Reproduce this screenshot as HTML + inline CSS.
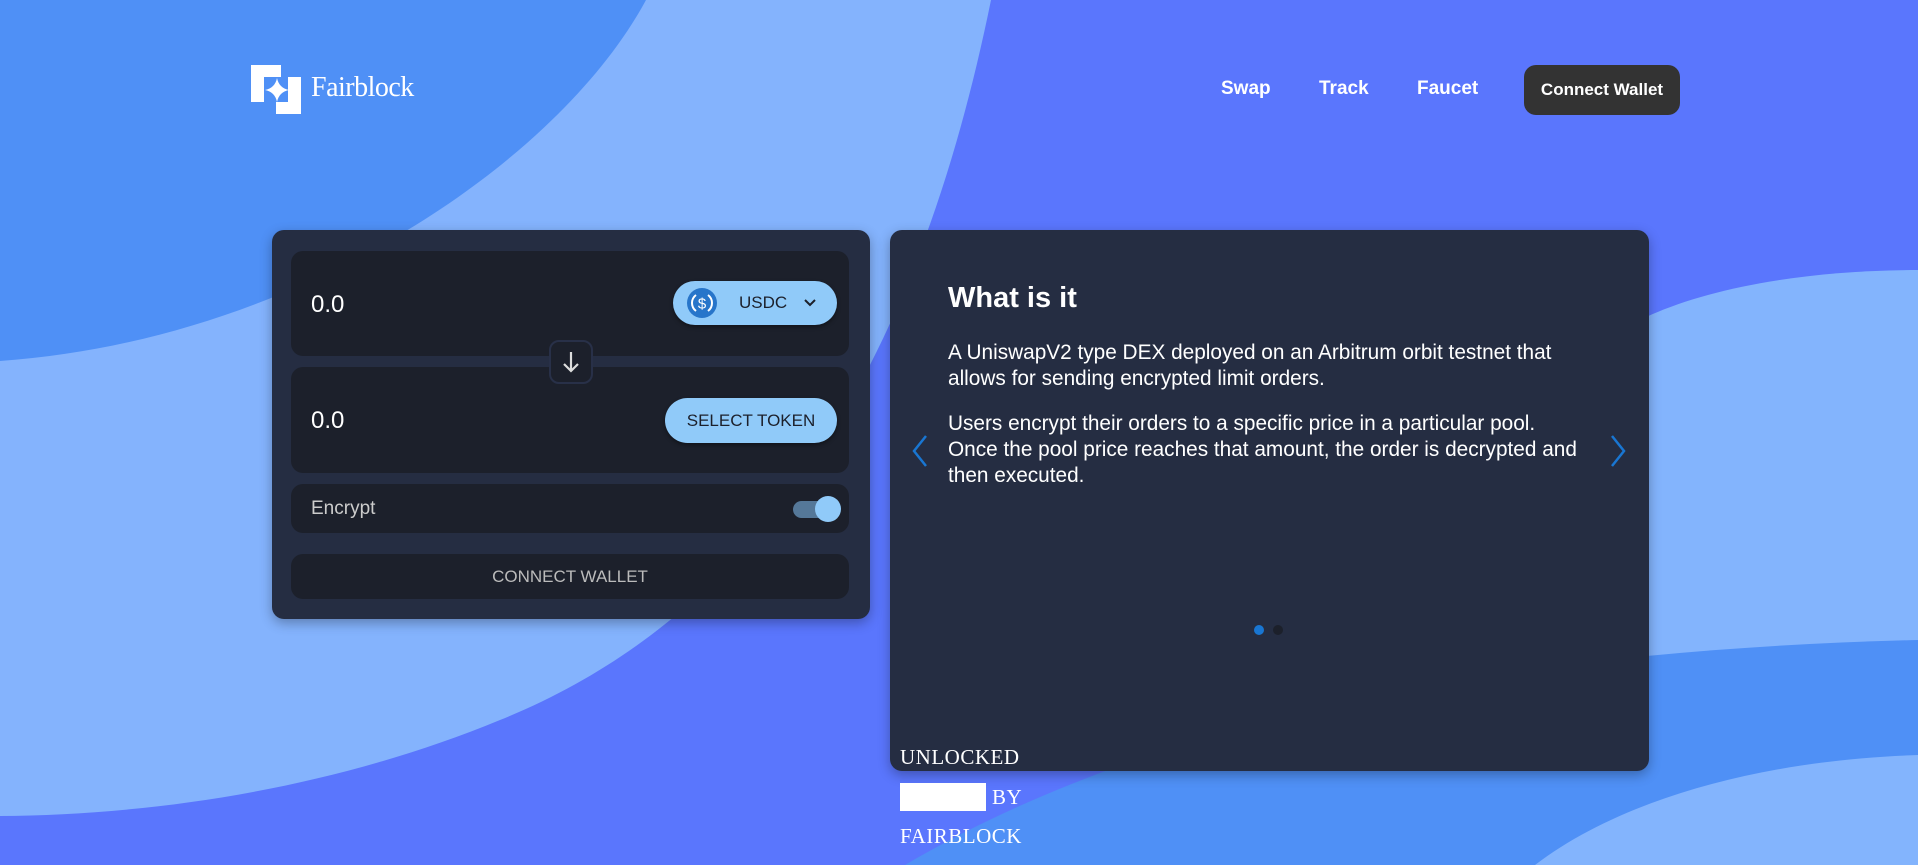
<!DOCTYPE html>
<html style="width:1918px;height:865px;overflow:hidden"><head><meta charset="utf-8"><style>
*{box-sizing:border-box;margin:0;padding:0}
body{width:1918px;height:865px;overflow:hidden;position:relative;font-family:"Liberation Sans",sans-serif}
#w{position:absolute;left:0;top:0;width:1918px;height:865px;overflow:hidden;background:#5a76fd}
.abs{position:absolute}
.nav{color:#fff;font-weight:bold;font-size:19px;top:78px}
.inner{position:absolute;left:19px;width:558px;background:#1c202b;border-radius:12px}
.val{position:absolute;left:20px;color:#fff;font-size:24px}
.pill{position:absolute;background:#90caf9;border-radius:24px;color:#1c202b;font-size:17px;display:flex;align-items:center;justify-content:center;box-shadow:0 2px 4px rgba(0,0,0,.4)}
.p{color:#fff;font-size:20.8px;line-height:26px;margin-bottom:19px}
.serif{font-family:"Liberation Serif",serif;color:#fff;font-size:21px;letter-spacing:0.5px}
</style></head><body><div id="w">
<svg class="abs" style="left:0;top:0" width="1918" height="865">
<path fill="#84b3fd" d="M991 0C930 300 800 600 500 720C330 790 150 815 0 816L0 0Z"/>
<path fill="#4f90f6" d="M646 0C560 160 300 340 0 361L0 0Z"/>
<path fill="#83b4fd" d="M1918 270C1800 270 1700 290 1640 320L1640 865L1918 865Z"/>
<path fill="#4f90f6" d="M905 865C1150 720 1500 650 1918 640L1918 865Z"/>
<path fill="#83b4fd" d="M1535 865C1620 800 1760 760 1918 755L1918 865Z"/>
</svg>

<svg class="abs" style="left:251px;top:65px" width="50" height="50" viewBox="0 0 50 50">
<path fill="#fff" d="M0 0H30V12H13V37H0Z"/><path fill="#fff" d="M37 12H50V49H25V37H37Z"/>
<path fill="#fff" d="M26 13Q28 23 38 25Q28 27 26 37Q24 27 14 25Q24 23 26 13Z"/></svg>
<div class="abs serif" style="left:311px;top:72px;font-size:28px;letter-spacing:-0.5px">Fairblock</div>

<div class="abs nav" style="left:1221px">Swap</div>
<div class="abs nav" style="left:1319px">Track</div>
<div class="abs nav" style="left:1417px">Faucet</div>
<div class="abs" style="left:1524px;top:65px;width:156px;height:50px;background:#333;border-radius:12px;color:#fff;font-weight:bold;font-size:17px;display:flex;align-items:center;justify-content:center">Connect Wallet</div>

<div class="abs" style="left:272px;top:230px;width:598px;height:389px;background:#252d42;border-radius:12px;box-shadow:0 4px 12px rgba(0,0,0,.3)">
 <div class="inner" style="top:21px;height:105px"><div class="val" style="top:40px">0.0</div>
  <div class="pill" style="left:382px;top:30px;width:164px;height:44px;justify-content:flex-start">
   <svg style="margin-left:14px" width="30" height="30" viewBox="0 0 30 30"><circle cx="15" cy="15" r="15" fill="#2775ca"/><path d="M9 7A10 10 0 0 0 9 23M21 7A10 10 0 0 1 21 23" stroke="#fff" stroke-width="2" fill="none"/><text x="15" y="20.5" fill="#fff" font-size="15" font-family="Liberation Sans" text-anchor="middle">$</text></svg>
   <span style="margin-left:22px">USDC</span><svg style="margin-left:16px" width="14" height="10"><path d="M2 2L7 7L12 2" stroke="#1c202b" stroke-width="2" fill="none"/></svg></div></div>
 <div class="inner" style="top:137px;height:106px"><div class="val" style="top:40px">0.0</div>
  <div class="pill" style="left:374px;top:31px;width:172px;height:45px">SELECT TOKEN</div></div>
 <div class="abs" style="left:277px;top:110px;width:44px;height:44px;background:#1c202b;border:2px solid #283048;border-radius:10px;z-index:2"><svg width="40" height="40" viewBox="0 0 40 40"><path d="M20 10V29M13 22L20 29L27 22" stroke="#ddd" stroke-width="2.2" fill="none"/></svg></div>
 <div class="inner" style="top:254px;height:49px"><div class="abs" style="left:20px;top:14px;color:#ccc;font-size:19px">Encrypt</div>
  <div class="abs" style="left:502px;top:17px;width:44px;height:17px;border-radius:9px;background:#557899"></div>
  <div class="abs" style="left:524px;top:12px;width:26px;height:26px;border-radius:50%;background:#90caf9"></div></div>
 <div class="inner" style="top:324px;height:45px;color:#bbb;font-size:17px;text-align:center;line-height:45px">CONNECT WALLET</div>
</div>

<div class="abs" style="left:890px;top:230px;width:759px;height:541px;background:#252d42;border-radius:12px;box-shadow:0 4px 12px rgba(0,0,0,.3)">
 <div class="abs" style="left:58px;top:52px;color:#fff;font-size:29px;font-weight:bold">What is it</div>
 <div class="abs" style="left:58px;top:110px;width:640px">
  <p class="p">A UniswapV2 type DEX deployed on an Arbitrum orbit testnet that allows for sending encrypted limit orders.</p>
  <p class="p">Users encrypt their orders to a specific price in a particular pool. Once the pool price reaches that amount, the order is decrypted and then executed.</p></div>
 <svg class="abs" style="left:20px;top:204px" width="20" height="34"><path d="M16 2L4 17L16 32" stroke="#1976d2" stroke-width="2.5" fill="none"/></svg>
 <svg class="abs" style="left:718px;top:204px" width="20" height="34"><path d="M4 2L16 17L4 32" stroke="#1976d2" stroke-width="2.5" fill="none"/></svg>
 <div class="abs" style="left:364px;top:395px;width:10px;height:10px;border-radius:50%;background:#1976d2"></div>
 <div class="abs" style="left:383px;top:395px;width:10px;height:10px;border-radius:50%;background:#1c202b"></div>
</div>

<div class="abs serif" style="left:900px;top:745px">UNLOCKED</div>
<div class="abs" style="left:900px;top:783px;width:86px;height:28px;background:#fff"></div>
<div class="abs serif" style="left:992px;top:785px">BY</div>
<div class="abs serif" style="left:900px;top:824px">FAIRBLOCK</div>
</div></body></html>
